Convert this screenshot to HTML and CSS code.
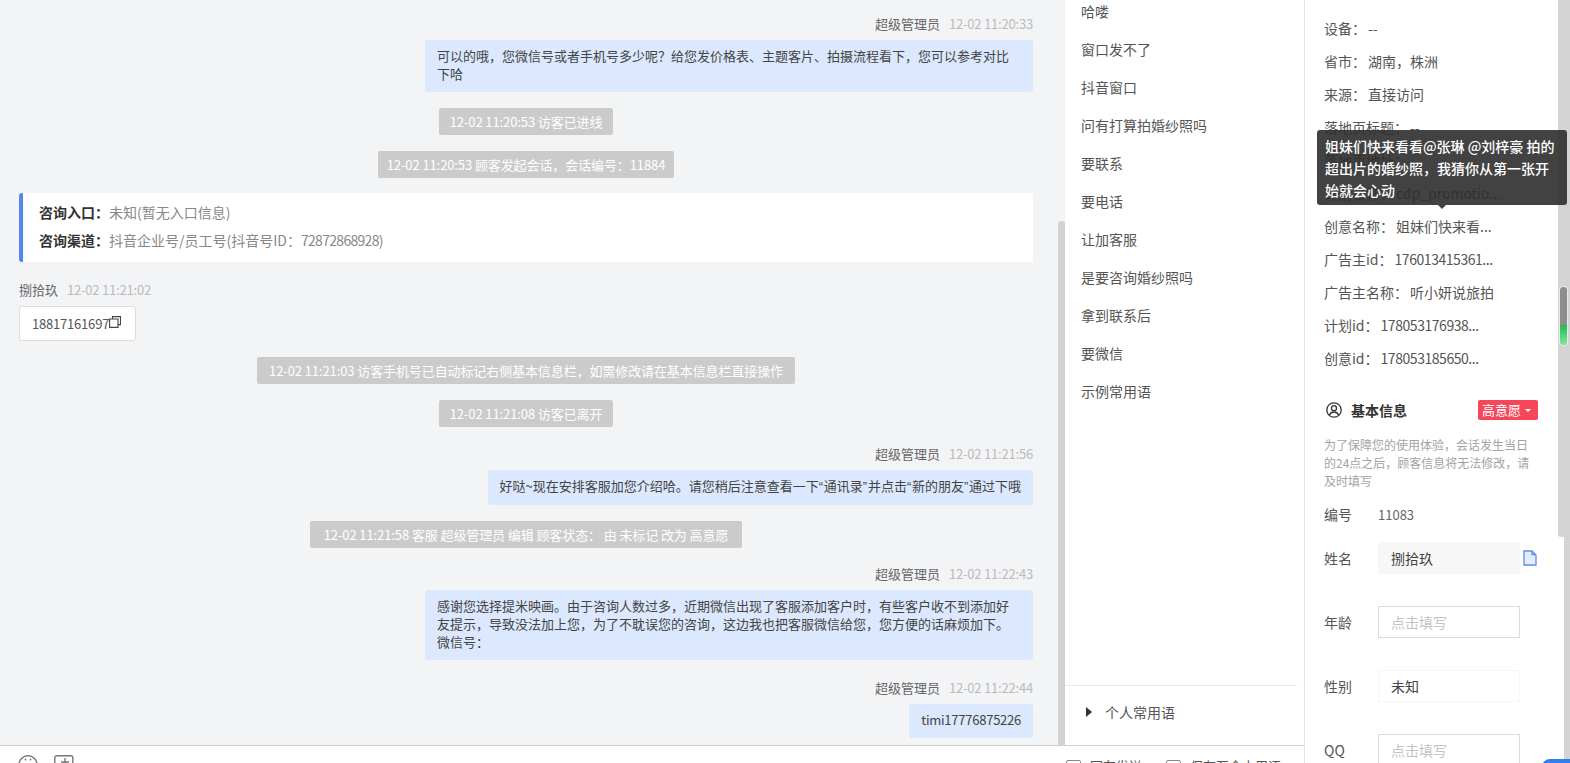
FILE: index.html
```html
<!DOCTYPE html>
<html lang="zh">
<head>
<meta charset="utf-8">
<title>会话</title>
<link rel="stylesheet" href="styles.css">
</head>
<body>
<div class="app">
  <div class="main">
    <div class="upper">
      <section class="chat">
        <div class="msgs">
          <div class="meta"><span class="who">超级管理员</span><span class="when">12-02 11:20:33</span></div>
          <div class="bubble">可以的哦，您微信号或者手机号多少呢？给您发价格表、主题客片、拍摄流程看下，您可以参考对比下哈</div>
          <div class="note n1">12-02 11:20:53 访客已进线</div>
          <div class="note n2">12-02 11:20:53 顾客发起会话，会话编号：11884</div>
          <div class="card">
            <div class="card-row"><b>咨询入口：</b>未知(暂无入口信息)</div>
            <div class="card-row"><b>咨询渠道：</b>抖音企业号/员工号(抖音号ID：<span class="digits">72872868928)</span></div>
          </div>
          <div class="meta left"><span class="who">捌拾玖</span><span class="when">12-02 11:21:02</span></div>
          <div class="phone">18817161697<svg class="copy" viewBox="0 0 12 12" width="12" height="12"><path d="M3.5 2.8V.6h8v8H9.2M.6 3h8.4v8.4H.6z" fill="none" stroke="#444" stroke-width="1.1"/></svg></div>
          <div class="note n3">12-02 11:21:03 访客手机号已自动标记右侧基本信息栏，如需修改请在基本信息栏直接操作</div>
          <div class="note n1">12-02 11:21:08 访客已离开</div>
          <div class="meta m1"><span class="who">超级管理员</span><span class="when">12-02 11:21:56</span></div>
          <div class="bubble">好哒~现在安排客服加您介绍哈。请您稍后注意查看一下<span class="q">“</span>通讯录<span class="q">”</span>并点击<span class="q">“</span>新的朋友<span class="q">”</span>通过下哦</div>
          <div class="note n4">12-02 11:21:58 客服 超级管理员 编辑 顾客状态： 由 未标记 改为 高意愿</div>
          <div class="meta m2"><span class="who">超级管理员</span><span class="when">12-02 11:22:43</span></div>
          <div class="bubble">感谢您选择提米映画。由于咨询人数过多，近期微信出现了客服添加客户时，有些客户收不到添加好友提示，导致没法加上您，为了不耽误您的咨询，这边我也把客服微信给您，您方便的话麻烦加下。<br>微信号：</div>
          <div class="meta m3"><span class="who">超级管理员</span><span class="when">12-02 11:22:44</span></div>
          <div class="bubble tight">timi17776875226</div>
        </div>
        <div class="chat-track"></div>
      </section>
      <aside class="phrases">
        <ul class="phrase-list">
          <li>哈喽</li>
          <li>窗口发不了</li>
          <li>抖音窗口</li>
          <li>问有打算拍婚纱照吗</li>
          <li>要联系</li>
          <li>要电话</li>
          <li>让加客服</li>
          <li>是要咨询婚纱照吗</li>
          <li>拿到联系后</li>
          <li>要微信</li>
          <li>示例常用语</li>
        </ul>
        <div class="personal"><i class="tri"></i>个人常用语</div>
      </aside>
    </div>
    <div class="toolbar">
      <div class="tools">
        <svg class="tool" viewBox="0 0 20 20" width="20" height="20"><circle cx="10" cy="10" r="9.2" fill="none" stroke="#777" stroke-width="1.4"/><circle cx="7.5" cy="4.5" r=".9" fill="#777"/><circle cx="12.5" cy="4.5" r=".9" fill="#777"/></svg>
        <svg class="tool" viewBox="0 0 20 20" width="20" height="20"><rect x=".8" y=".8" width="18" height="18.4" rx="2" fill="none" stroke="#777" stroke-width="1.4"/><path d="M11 3v8M7 7h8" stroke="#777" stroke-width="1.4"/></svg>
      </div>
      <div class="checks">
        <label class="check"><i class="box"></i>回车发送</label>
        <label class="check"><i class="box"></i>保存至个人用语</label>
      </div>
    </div>
  </div>
  <aside class="side">
    <div class="info">
      <ul class="facts">
        <li>设备：<span class="v">--</span></li>
        <li>省市：<span class="v">湖南，株洲</span></li>
        <li>来源：<span class="v">直接访问</span></li>
        <li>落地页标题：<span class="v">--</span></li>
        <li>落地页地址：</li>
        <li>计划名称：<span class="v">cdp_promotio...</span></li>
        <li>创意名称：<span class="v">姐妹们快来看...</span></li>
        <li>广告主id：<span class="v num">176013415361...</span></li>
        <li>广告主名称：<span class="v">听小妍说旅拍</span></li>
        <li>计划id：<span class="v num">178053176938...</span></li>
        <li>创意id：<span class="v num">178053185650...</span></li>
      </ul>
      <div class="basic-head">
        <svg viewBox="0 0 16 16" width="16" height="16"><circle cx="8" cy="8" r="7.2" fill="none" stroke="#333" stroke-width="1.3"/><circle cx="8" cy="6.2" r="2.5" fill="none" stroke="#333" stroke-width="1.3"/><path d="M3.4 13c1-2.2 2.6-3 4.6-3s3.6.8 4.6 3" fill="none" stroke="#333" stroke-width="1.3"/></svg>
        <h3>基本信息</h3>
        <span class="tag">高意愿<i class="caret"></i></span>
      </div>
      <p class="hint">为了保障您的使用体验，会话发生当日的24点之后，顾客信息将无法修改，请及时填写</p>
      <div class="field plain"><span class="label">编号</span><span class="val">11083</span></div>
      <div class="field"><span class="label">姓名</span><span class="input filled">捌拾玖</span>
        <svg class="doc" viewBox="0 0 14 16" width="14" height="16"><path d="M1 1h8l4 4v10H1z" fill="#e4ecfb" stroke="#5b8def" stroke-width="1.3"/><path d="M9 1v3.6h4" fill="none" stroke="#5b8def" stroke-width="1.3"/></svg>
      </div>
      <div class="field"><span class="label">年龄</span><span class="input empty">点击填写</span></div>
      <div class="field"><span class="label">性别</span><span class="input faint">未知</span></div>
      <div class="field"><span class="label">QQ</span><span class="input empty">点击填写</span></div>
    </div>
    <div class="rail">
      <div class="rail-top"><div class="thumb"></div></div>
      <div class="rail-bottom"></div>
    </div>
    <div class="tooltip">姐妹们快来看看@张琳 @刘梓豪 拍的超出片的婚纱照，我猜你从第一张开始就会心动</div>
    <div class="float-btn"></div>
  </aside>
</div>
</body>
</html>
```
FILE: styles.css
```css
* { box-sizing: border-box; }
html, body { margin: 0; padding: 0; height: 100%; overflow: hidden; background: #fff; }
body { font-family: "Noto Sans CJK SC", "Liberation Sans", sans-serif; font-size: 13px; color: #555; }
ul { list-style: none; margin: 0; padding: 0; }
.app { display: flex; width: 1570px; height: 763px; overflow: hidden; }
.main { width: 1304px; display: flex; flex-direction: column; flex: none; }
.upper { display: flex; height: 745px; flex: none; }
.chat { width: 1065px; background: #f3f4f6; display: flex; flex: none; }
.msgs { width: 1033px; padding-left: 19px; padding-top: 15px; flex: none; display: flex; flex-direction: column; align-items: flex-end; }
.chat-track { width: 7px; margin-left: 25px; margin-top: 221px; background: #d2d2d2; border-radius: 3px 3px 0 0; }
.meta { height: 18px; line-height: 18px; display: flex; gap: 9px; color: #666; }
.meta.left { align-self: flex-start; margin-top: 19px; }
.meta.m1 { margin-top: 18px; }
.meta.m2 { margin-top: 17px; }
.meta.m3 { margin-top: 19px; }
.when { color: #bbb; letter-spacing: -.2px; }
.bubble { margin-top: 7px; max-width: 608px; padding: 7px 12px 9px; line-height: 18px; background: #dbe8fe; border-radius: 3px; color: #444; }
.tight { letter-spacing: -.25px; }
.q { font-family: "Liberation Sans", sans-serif; letter-spacing: .7px; }
.note { align-self: center; margin-top: 16px; height: 27px; line-height: 27px; padding: 0 11px; background: #cbcbcb; color: #fff; border-radius: 2px; white-space: nowrap; letter-spacing: -.1px; }
.n2 { padding: 0 9px; }
.n3 { padding: 0 12px; }
.n4 { padding: 0 13.5px; }
.card { align-self: stretch; margin-top: 15px; height: 69px; padding: 5px 16px; background: #fff; border-left: 4px solid #5089e8; border-radius: 3px 0 0 3px; color: #888; font-size: 14px; }
.card-row { height: 28px; line-height: 28px; }
.card-row b { color: #333; font-weight: 700; }
.digits { letter-spacing: -.7px; }
.phone { align-self: flex-start; margin-top: 7px; width: 117px; height: 35px; padding: 0 12px; display: flex; align-items: center; background: #fff; border: 1px solid #ddd; border-radius: 3px; color: #555; letter-spacing: -.2px; }
.copy { flex: none; margin-bottom: 3px; }
.phrases { width: 239px; flex: none; background: #fff; display: flex; flex-direction: column; justify-content: space-between; font-size: 14px; }
.phrase-list { padding-left: 16px; margin-top: -8px; }
.phrase-list li { height: 38px; line-height: 38px; color: #555; }
.personal { margin-right: 7px; height: 60px; border-top: 1px solid #e8e8e8; padding: 15px 0 0 39px; line-height: 22px; display: flex; align-items: flex-start; color: #555; }
.tri { width: 0; height: 0; border-left: 6px solid #333; border-top: 5px solid transparent; border-bottom: 5px solid transparent; margin: 6px 13px 0 -18px; }
.toolbar { flex: 1; border-top: 1px solid #cfcfcf; display: flex; justify-content: space-between; background: #fff; overflow: hidden; }
.tools { display: flex; gap: 16px; padding: 9px 0 0 18px; }
.tool { flex: none; }
.checks { display: flex; gap: 24px; padding: 11px 0 0 0; width: 238px; flex: none; }
.check { display: flex; gap: 9px; white-space: nowrap; flex: none; line-height: 18px; }
.box { width: 15px; height: 15px; border: 1px solid #888; border-radius: 2px; flex: none; margin-top: 3px; }
.side { width: 266px; flex: none; display: flex; position: relative; border-left: 1px solid #e4e4e4; font-size: 14px; }
.info { width: 253px; flex: none; padding: 0 20px 0 19px; }
.facts { padding-top: 12px; }
.facts li { height: 33px; line-height: 33px; color: #555; white-space: nowrap; }
.v { margin-left: 2px; }
.num { letter-spacing: -.45px; }
.basic-head { margin-top: 20px; height: 30px; padding-left: 2px; display: flex; align-items: center; color: #333; }
.basic-head h3 { margin: 0 0 0 9px; font-size: 14px; font-weight: 700; color: #333; }
.tag { margin-left: auto; width: 60px; height: 20px; line-height: 20px; padding-left: 4px; display: flex; align-items: center; background: #f5465a; color: #fff; border-radius: 2px; font-size: 13px; }
.caret { width: 0; height: 0; border-top: 3px solid #fff; border-left: 3px solid transparent; border-right: 3px solid transparent; margin-left: 4px; }
.hint { margin: 11px 0 0; font-size: 12px; line-height: 18px; color: #a3a3a3; }
.field { display: flex; align-items: center; height: 32px; margin-bottom: 32px; }
.field.plain { height: 18px; margin: 15px 0 19px; }
.label { width: 54px; flex: none; color: #555; }
.val { color: #666; font-size: 13px; }
.input { width: 142px; height: 32px; line-height: 30px; padding: 0 12px; border: 1px solid transparent; flex: none; }
.filled { background: #f7f7f7; border-color: #f7f7f7; color: #444; }
.empty { border-color: #dcdcdc; color: #c4c4c4; }
.faint { border-color: #f6f6f6; color: #444; }
.doc { margin-left: 3px; flex: none; }
.rail { width: 12px; flex: none; display: flex; flex-direction: column; }
.rail-top { height: 537px; background: #d4d4d4; padding: 287px 3px 0 2px; border-radius: 0 0 0 3px; flex: none; }
.thumb { height: 58px; width: 7px; border-radius: 4px; background: linear-gradient(#8e8e8e 0, #8e8e8e 65%, #22b957 66%, #7ee89b 100%); box-shadow: 0 0 0 1px #e8e8e8; }
.rail-bottom { flex: 1; margin-left: 6px; background: #d4d4d4; }
.tooltip { position: absolute; left: 12px; top: 130px; width: 250px; height: 75px; padding: 5px 8px; font-size: 14px; font-weight: 500; line-height: 22px; color: #fff; background: rgba(45, 45, 45, .9); border-radius: 3px; }
.tooltip::after { content: ""; position: absolute; left: 121px; top: 75px; border-top: 4px solid rgba(45, 45, 45, .9); border-left: 4px solid transparent; border-right: 4px solid transparent; }
.float-btn { position: absolute; left: 237px; top: 759px; width: 40px; height: 20px; background: #2d7ff0; border-radius: 8px 0 0 0; }
```
